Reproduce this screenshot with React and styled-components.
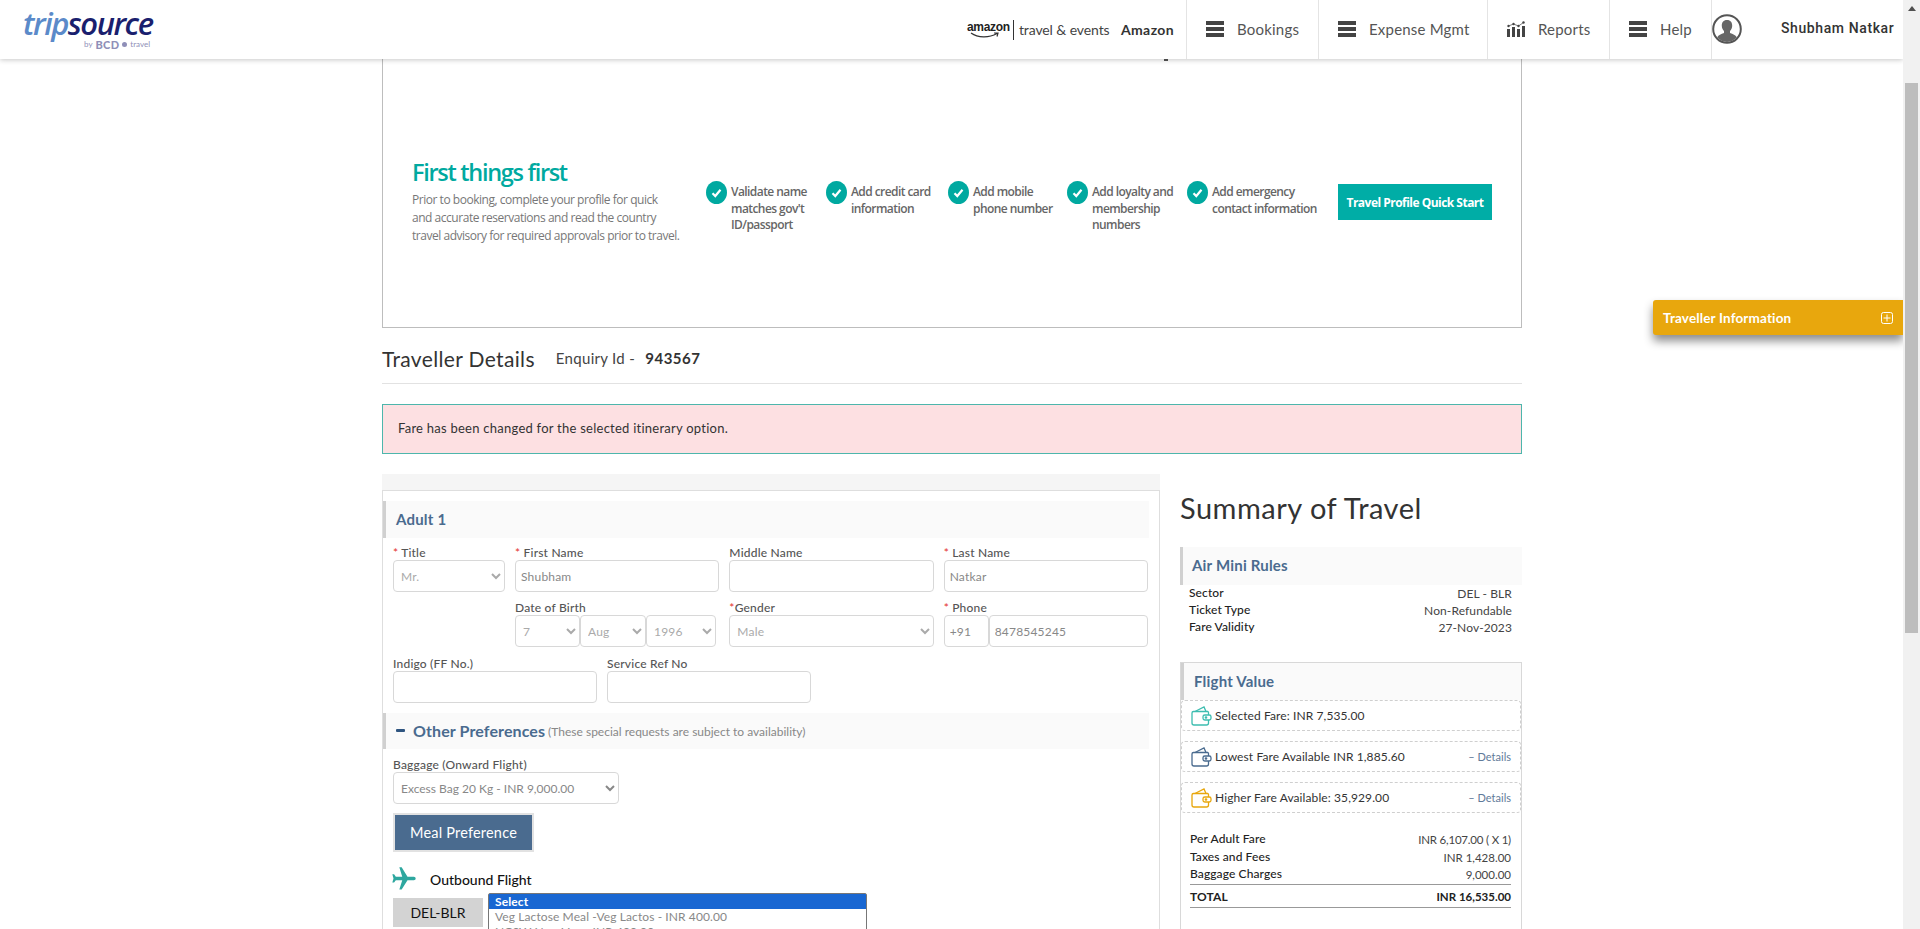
import React from 'react';
import styled, { createGlobalStyle } from 'styled-components';
import { MdFlight } from 'react-icons/md';

const font = '"Lato", "Liberation Sans", sans-serif';

const GlobalStyle = createGlobalStyle`
  html, body {
    margin: 0;
    height: 100%;
    overflow: hidden;
    background: #fff;
    font-family: ${font};
    color: #333;
  }
  * { box-sizing: border-box; }
`;

const Page = styled.div`
  display: flex;
  height: 929px;
  overflow: hidden;
`;

const Main = styled.div`
  position: relative;
  width: 1903px;
  height: 929px;
  overflow: hidden;
  flex: none;
`;

/* scrollbar */
const Track = styled.div`
  width: 17px;
  flex: none;
  background: #f1f1f1;
  display: flex;
  flex-direction: column;
  align-items: center;
`;

const Arrow = styled.div`
  width: 0;
  height: 0;
  margin-top: 6px;
  border-left: 4px solid transparent;
  border-right: 4px solid transparent;
  border-bottom: 5px solid #505050;
`;

const Thumb = styled.div`
  width: 13px;
  height: 550px;
  margin-top: 72px;
  background: #bdbdbd;
`;

/* header */
const Header = styled.header`
  position: relative;
  z-index: 5;
  height: 59px;
  background: #fff;
  box-shadow: 0 1px 5px rgba(0, 0, 0, 0.22);
  display: flex;
  justify-content: space-between;
`;

const LogoBox = styled.div`
  padding: 7px 0 0 23px;
  display: flex;
  flex-direction: column;
  align-items: flex-start;
`;

const LogoText = styled.div`
  font-family: "Open Sans", sans-serif;
  font-style: italic;
  font-weight: 600;
  font-size: 31px;
  line-height: 32px;
  letter-spacing: -1.5px;
  color: #1a1f6e;
  span { color: #5b8ac9; }
`;

const LogoBy = styled.div`
  display: flex;
  align-items: center;
  gap: 3px;
  margin: 0 0 0 61px;
  font-size: 8px;
  line-height: 11px;
  color: #8f8fb8;
  b { font-size: 11px; letter-spacing: 0.3px; font-weight: 900; }
`;

const Nav = styled.nav`
  display: flex;
  align-items: stretch;
`;

const Partner = styled.div`
  display: flex;
  align-items: center;
  width: 220px;
  border-right: 1px solid #e4e4e4;
  color: #333;
`;

const AmazonMark = styled.div`
  position: relative;
  font-family: "Liberation Sans", sans-serif;
  font-weight: 700;
  font-size: 12px;
  letter-spacing: -0.3px;
  line-height: 14px;
  padding: 0 3px 5px 0;
  color: #222;
  svg { position: absolute; left: 3px; bottom: 0; }
`;

const PartnerDivider = styled.i`
  width: 1px;
  height: 20px;
  background: #333;
  margin-right: 5px;
`;

const PartnerLabel = styled.span`
  font-size: 14px;
  letter-spacing: -0.1px;
  width: 91px;
  white-space: nowrap;
  color: #444;
`;

const PartnerName = styled.span`
  font-size: 14px;
  font-weight: 700;
  margin-left: 11px;
  letter-spacing: 0.4px;
`;

const NavItem = styled.a`
  display: flex;
  align-items: center;
  gap: 13px;
  width: ${(p) => p.$w}px;
  padding: 0 0 1px 19px;
  border-right: 1px solid #e4e4e4;
  font-size: 15px;
  letter-spacing: 0.2px;
  color: #555;
  white-space: nowrap;
`;

const UserBox = styled.div`
  display: flex;
  align-items: center;
  width: 191px;
  font-family: "Roboto", sans-serif;
  font-size: 14px;
  font-weight: 500;
  letter-spacing: 0.6px;
  color: #333;
  span { margin: -3px 0 0 39px; white-space: nowrap; }
  svg { margin-top: -1px; }
`;

/* content */
const Content = styled.div`
  width: 1140px;
  margin-left: 382px;
`;

const Banner = styled.section`
  position: relative;
  height: 269px;
  border: 1px solid #bdbdbd;
  border-top: 0;
  padding: 99px 0 0 29px;
  display: flex;
  align-items: flex-start;
`;

const BannerSpeck = styled.i`
  position: absolute;
  left: 781px;
  top: 0;
  width: 4px;
  height: 2px;
  background: #555;
`;

const Intro = styled.div`
  width: 294px;
  flex: none;
  margin-top: -1px;
`;

const IntroTitle = styled.h2`
  margin: 0 0 4px;
  font-family: "Open Sans", sans-serif;
  font-size: 23.5px;
  line-height: 30px;
  font-weight: 600;
  letter-spacing: -1.3px;
  color: #00a9a0;
`;

const IntroText = styled.p`
  margin: 0;
  font-family: "Open Sans", sans-serif;
  font-size: 12px;
  line-height: 18px;
  letter-spacing: -0.47px;
  color: #777;
  white-space: nowrap;
`;

const CheckItem = styled.div`
  display: flex;
  gap: 4px;
  width: ${(p) => p.$w}px;
  flex: none;
  margin-top: 23px;
`;

const CheckDot = styled.span`
  width: 21px;
  height: 23px;
  flex: none;
  border-radius: 50%;
  background: #00a9a0;
  display: flex;
  align-items: center;
  justify-content: center;
`;

const CheckText = styled.span`
  font-family: "Open Sans", sans-serif;
  font-size: 12px;
  font-weight: 600;
  line-height: 16.5px;
  letter-spacing: -0.57px;
  color: #666;
  white-space: pre-line;
  padding-top: 3px;
`;

const QuickStart = styled.div`
  width: 154px;
  height: 36px;
  flex: none;
  margin: 26px 0 0 10px;
  background: #00ada6;
  color: #fff;
  font-family: "Open Sans", sans-serif;
  font-size: 12px;
  font-weight: 700;
  letter-spacing: -0.52px;
  display: flex;
  align-items: center;
  justify-content: center;
  white-space: nowrap;
`;

const TitleRow = styled.div`
  height: 56px;
  display: flex;
  align-items: center;
  padding-top: 5px;
  border-bottom: 1px solid #e2e2e2;
`;

const PageTitle = styled.h1`
  margin: 0;
  font-size: 21px;
  font-weight: 400;
  letter-spacing: 0.35px;
  color: #333;
`;

const Enquiry = styled.span`
  margin-left: 21px;
  font-size: 15px;
  letter-spacing: 0.3px;
  color: #444;
  b { margin-left: 6px; color: #333; font-weight: 700; font-size: 15px; letter-spacing: 0.5px; }
`;

const Alert = styled.div`
  height: 50px;
  margin-top: 20px;
  padding: 0 0 2px 15px;
  border: 1px solid #4db6ac;
  background: #fde0e2;
  display: flex;
  align-items: center;
  font-size: 13px;
  letter-spacing: 0.25px;
  color: #333;
`;

const Columns = styled.div`
  display: grid;
  grid-template-columns: 778px 342px;
  column-gap: 20px;
  margin-top: 20px;
`;

const Band = styled.div`
  height: 16px;
  background: #f5f5f5;
`;

const FormPanel = styled.div`
  height: 500px;
  border: 1px solid #dedede;
  border-bottom: 0;
  padding-top: 10px;
`;

const SectionHead = styled.div`
  display: flex;
  align-items: center;
  height: ${(p) => p.$h}px;
  margin: ${(p) => p.$m || '0 10px 0 0'};
  padding: 0 0 2px ${(p) => p.$pad || 10}px;
  background: #fafafa;
  border-left: 3px solid #d0d0d0;
  font-size: 15px;
  font-weight: 700;
  letter-spacing: 0.2px;
  color: #4a6b8f;
`;

const Fields = styled.div`
  display: grid;
  grid-template-columns: 112px repeat(3, 1fr);
  column-gap: 10px;
  row-gap: 8px;
  margin: 7px 11px 0 10px;
`;

const Field = styled.div`
  grid-column: ${(p) => p.$col || 'auto'};
  min-width: 0;
`;

const Label = styled.label`
  display: block;
  height: 15px;
  font-size: 12px;
  line-height: 15px;
  font-weight: 500;
  letter-spacing: 0.2px;
  color: #555;
  em { color: #e53935; font-style: normal; }
`;

const controlStyle = `
  display: block;
  height: 32px;
  border: 1px solid #d8d8d8;
  border-radius: 4px;
  background: #fff;
  font-family: ${font};
  font-size: 12px;
  color: #888;
`;

const Input = styled.input`
  ${controlStyle}
  width: ${(p) => p.$w || '100%'};
  min-width: 0;
  padding: 0 5px;
  flex: ${(p) => p.$grow || 'none'};
  letter-spacing: 0.2px;
  outline: none;
`;

const Select = styled.select`
  ${controlStyle}
  width: ${(p) => p.$w || '100%'};
  padding: 0 3px;
  flex: none;
  letter-spacing: ${(p) => p.$spacing || '0.2px'};
  color: ${(p) => p.$muted ? '#aaa' : '#888'};
  outline: none;
`;

const Inline = styled.div`
  display: flex;
`;

const FieldRow = styled.div`
  display: flex;
  gap: 10px;
  margin: 9px 0 0 10px;
  ${Field} { width: 204px; }
`;

const PrefHead = styled(SectionHead)`
  gap: 7px;
  font-size: 16px;
  letter-spacing: 0.1px;
  i {
    width: 9px;
    height: 3px;
    border-radius: 1px;
    background: #2f5580;
    margin-right: 1px;
  }
  small {
    font-size: 12px;
    font-weight: 400;
    letter-spacing: 0;
    color: #888;
    margin: 2px 0 0 -4px;
  }
`;

const BaggageField = styled.div`
  margin: 8px 0 0 10px;
  width: 226px;
`;

const MealButton = styled.button`
  display: block;
  width: 141px;
  height: 39px;
  margin: 9px 0 0 10px;
  border: 2px solid #e2e2e2;
  background: #4a6b8f;
  color: #fff;
  font-family: ${font};
  font-size: 14.5px;
  letter-spacing: 0.2px;
`;

const FlightTitle = styled.div`
  display: flex;
  align-items: center;
  gap: 12px;
  height: 28px;
  margin: 13px 0 0 7px;
  font-size: 14px;
  font-weight: 500;
  color: #111;
  svg { transform: rotate(90deg); color: #2ea79f; }
`;

const MealRow = styled.div`
  display: flex;
  align-items: flex-start;
  margin: 0 0 0 10px;
`;

const SectorTag = styled.div`
  width: 90px;
  height: 29px;
  margin: 5px 5px 0 0;
  background: #d3d3d3;
  color: #111;
  font-size: 14px;
  display: flex;
  align-items: center;
  justify-content: center;
`;

const MealList = styled.select`
  width: 379px;
  height: 70px;
  border: 1px solid #777;
  padding: 0;
  font-family: ${font};
  font-size: 12px;
  letter-spacing: 0.1px;
  color: #888;
  overflow: hidden;
  outline: none;
  option {
    height: 15px;
    min-height: 15px;
    line-height: 15px;
    padding: 0 6px;
  }
  option:checked {
    background: #1967d2 linear-gradient(#1967d2, #1967d2);
    color: #fff;
    font-weight: 700;
  }
`;

/* summary */
const SummaryTitle = styled.h2`
  margin: 15px 0 21px;
  height: 37px;
  font-size: 29px;
  line-height: 37px;
  font-weight: 400;
  letter-spacing: 0.5px;
  color: #333;
`;

const RuleRows = styled.div`
  padding: 0 10px 0 9px;
  margin-top: -1px;
  height: 78px;
`;

const Row = styled.div`
  display: flex;
  justify-content: space-between;
  align-items: center;
  height: ${(p) => p.$h || 17}px;
  font-size: 12px;
  letter-spacing: 0.1px;
  color: #222;
  span:first-child { font-weight: ${(p) => p.$strong ? 700 : 500}; margin-top: -1px; }
  span:last-child {
    color: ${(p) => p.$strong ? '#222' : '#444'};
    font-weight: ${(p) => p.$strong ? 700 : 400};
    margin-top: 1px;
  }
`;

const ValueBox = styled.div`
  height: 300px;
  border: 1px solid #d8d8d8;
  border-bottom: 0;
`;

const FareRow = styled.div`
  display: flex;
  align-items: center;
  height: 31px;
  margin-bottom: 10px;
  padding: 0 9px;
  border: 1px dashed #cfcfcf;
  border-radius: 4px;
  font-size: 12px;
  letter-spacing: 0.1px;
  color: #333;
  svg { margin-right: 3px; flex: none; }
`;

const FareDetails = styled.span`
  margin-left: auto;
  font-size: 11px;
  color: #5f7a99;
  letter-spacing: 0;
`;

const Breakdown = styled.div`
  padding: 7px 10px 0 9px;
`;

const Amount = styled.span`
  font-size: 11.5px;
  letter-spacing: ${(p) => p.$tight ? '-0.2px' : '0'};
`;

const TotalRow = styled(Row)`
  margin-top: 2px;
  height: 24px;
  border-top: 1px solid #999;
  border-bottom: 1px solid #999;
  span:first-child, span:last-child { margin-top: 0; }
`;

const FloatingTab = styled.div`
  position: absolute;
  z-index: 4;
  left: 1653px;
  top: 300px;
  width: 250px;
  height: 35px;
  padding: 0 10px;
  background: #e8a70d;
  border-radius: 3px 0 0 3px;
  box-shadow: 0 6px 10px rgba(0, 0, 0, 0.45);
  color: #fff;
  font-size: 13.5px;
  font-weight: 700;
  letter-spacing: 0.15px;
  display: flex;
  align-items: center;
  justify-content: space-between;
`;

function Burger() {
  return (
    <svg width="18" height="16" viewBox="0 0 18 16" fill="#444">
      <rect width="18" height="4" />
      <rect y="6" width="18" height="4" />
      <rect y="12" width="18" height="4" />
    </svg>
  );
}

function ReportsIcon() {
  return (
    <svg width="18" height="16" viewBox="0 0 18 16" fill="#444">
      <rect x="0" y="8" width="3" height="8" />
      <rect x="5" y="6" width="3" height="10" />
      <rect x="10" y="8" width="3" height="8" />
      <rect x="15" y="5" width="3" height="11" />
      <circle cx="1.5" cy="5" r="1.2" />
      <circle cx="6.5" cy="3" r="1.2" />
      <circle cx="11.5" cy="5" r="1.2" />
      <circle cx="16.5" cy="1.5" r="1.2" />
      <path d="M1.500 5 6.500 3l5 2 5-3.500" stroke="#444" strokeWidth=".7" fill="none" />
    </svg>
  );
}

function Avatar() {
  return (
    <svg width="30" height="30" viewBox="0 0 30 30">
      <circle cx="15" cy="15" r="13.8" fill="#fff" stroke="#555" strokeWidth="2" />
      <path
        d="M15 6c-3.6 0-5.4 2.6-5.2 6 .1 2 .9 3.8 2.2 5v2c-2.8 1-5.6 2-6.8 4.3A13 13 0 0 0 15 28a13 13 0 0 0 9.8-4.7C23.6 21 20.800 20 18 19v-2c1.300-1.200 2.100-3 2.200-5 .2-3.400-1.600-6-5.200-6z"
        fill="#666"
      />
    </svg>
  );
}

function Check() {
  return (
    <svg width="11" height="10" viewBox="0 0 11 10" fill="none" stroke="#fff" strokeWidth="2.2">
      <path d="M1.500 5.200 4.300 8 9.500 1.800" />
    </svg>
  );
}

function Wallet({ color }) {
  return (
    <svg width="21" height="20" viewBox="0 0 21 20" fill="none" stroke={color} strokeWidth="1.3">
      <path d="M4 5.500 13 1l2 4.500" />
      <path d="M17 5.500H2.500A1.500 1.500 0 0 0 1 7v10a2 2 0 0 0 2 2h12.500a2 2 0 0 0 2-2v-3" />
      <path d="M17.500 9V7a1.500 1.500 0 0 0-.5-1.500" />
      <rect x="12" y="9" width="8" height="5" rx="1.800" />
      <circle cx="15" cy="11.500" r=".7" />
    </svg>
  );
}

function PlusBox() {
  return (
    <svg width="12" height="12" viewBox="0 0 12 12" fill="none" stroke="#fff" strokeWidth="1">
      <rect x=".5" y=".5" width="11" height="11" rx="2" />
      <path d="M6 2.500v7M2.500 6h7" />
    </svg>
  );
}

const checks = [
  { w: 120, text: "Validate name\nmatches gov't\nID/passport" },
  { w: 122, text: 'Add credit card\ninformation' },
  { w: 119, text: 'Add mobile\nphone number' },
  { w: 120, text: 'Add loyalty and\nmembership\nnumbers' },
  { w: 141, text: 'Add emergency\ncontact information' },
];

const navItems = [
  { label: 'Bookings', w: 132 },
  { label: 'Expense Mgmt', w: 169 },
  { label: 'Reports', w: 122, icon: <ReportsIcon /> },
  { label: 'Help', w: 102 },
];

const fares = [
  { label: 'Selected Fare: INR 7,535.00', color: '#3dbdb0' },
  { label: 'Lowest Fare Available INR 1,885.60', color: '#4a6b8f', details: true },
  { label: 'Higher Fare Available: 35,929.00', color: '#e8a70d', details: true },
];

export default function App() {
  return (
    <Page>
      <GlobalStyle />
      <Main>
        <Header>
          <LogoBox>
            <LogoText><span>trip</span>source</LogoText>
            <LogoBy>
              by <b>BCD</b>
              <svg width="5" height="5" viewBox="0 0 5 5"><circle cx="2.500" cy="2.500" r="2.500" fill="#8f8fb8" /></svg>
              travel
            </LogoBy>
          </LogoBox>
          <Nav>
            <Partner>
              <AmazonMark>
                amazon
                <svg width="30" height="7" viewBox="0 0 30 7" fill="none" stroke="#333" strokeWidth="1.200">
                  <path d="M1 1c7 5 18 5 26 .5M24 1l4 0-1 3.500" />
                </svg>
              </AmazonMark>
              <PartnerDivider />
              <PartnerLabel>travel &amp; events</PartnerLabel>
              <PartnerName>Amazon</PartnerName>
            </Partner>
            {navItems.map((item) => (
              <NavItem key={item.label} $w={item.w}>
                {item.icon || <Burger />}
                {item.label}
              </NavItem>
            ))}
            <UserBox>
              <Avatar />
              <span>Shubham Natkar</span>
            </UserBox>
          </Nav>
        </Header>

        <Content>
          <Banner>
            <BannerSpeck />
            <Intro>
              <IntroTitle>First things first</IntroTitle>
              <IntroText>
                Prior to booking, complete your profile for quick<br />
                and accurate reservations and read the country<br />
                travel advisory for required approvals prior to travel.
              </IntroText>
            </Intro>
            {checks.map((c) => (
              <CheckItem key={c.text} $w={c.w}>
                <CheckDot><Check /></CheckDot>
                <CheckText>{c.text}</CheckText>
              </CheckItem>
            ))}
            <QuickStart>Travel Profile Quick Start</QuickStart>
          </Banner>

          <TitleRow>
            <PageTitle>Traveller Details</PageTitle>
            <Enquiry>Enquiry Id - <b>943567</b></Enquiry>
          </TitleRow>

          <Alert>Fare has been changed for the selected itinerary option.</Alert>

          <Columns>
            <div>
              <Band />
              <FormPanel>
                <SectionHead $h={37}>Adult 1</SectionHead>
                <Fields>
                  <Field>
                    <Label><em>*</em> Title</Label>
                    <Select $muted defaultValue="Mr."><option>Mr.</option></Select>
                  </Field>
                  <Field>
                    <Label><em>*</em> First Name</Label>
                    <Input defaultValue="Shubham" />
                  </Field>
                  <Field>
                    <Label>Middle Name</Label>
                    <Input />
                  </Field>
                  <Field>
                    <Label><em>*</em> Last Name</Label>
                    <Input defaultValue="Natkar" />
                  </Field>
                  <Field $col="2">
                    <Label>Date of Birth</Label>
                    <Inline>
                      <Select $muted $w="65px"><option>7</option></Select>
                      <Select $muted $w="66px"><option>Aug</option></Select>
                      <Select $muted $w="70px"><option>1996</option></Select>
                    </Inline>
                  </Field>
                  <Field>
                    <Label><em>*</em>Gender</Label>
                    <Select $muted><option>Male</option></Select>
                  </Field>
                  <Field>
                    <Label><em>*</em> Phone</Label>
                    <Inline>
                      <Input $w="45px" defaultValue="+91" />
                      <Input $w="auto" $grow="1 1 0" defaultValue="8478545245" />
                    </Inline>
                  </Field>
                </Fields>
                <FieldRow>
                  <Field>
                    <Label>Indigo (FF No.)</Label>
                    <Input />
                  </Field>
                  <Field>
                    <Label>Service Ref No</Label>
                    <Input />
                  </Field>
                </FieldRow>
                <PrefHead $h={36} $m="10px 10px 0 0" $pad={10}>
                  <i />
                  Other Preferences
                  <small>(These special requests are subject to availability)</small>
                </PrefHead>
                <BaggageField>
                  <Label>Baggage (Onward Flight)</Label>
                  <Select $spacing="0"><option>Excess Bag 20 Kg - INR 9,000.00</option></Select>
                </BaggageField>
                <MealButton>Meal Preference</MealButton>
                <FlightTitle>
                  <MdFlight size={28} />
                  Outbound Flight
                </FlightTitle>
                <MealRow>
                  <SectorTag>DEL-BLR</SectorTag>
                  <MealList size={3} defaultValue="Select">
                    <option>Select</option>
                    <option>Veg Lactose Meal -Veg Lactos - INR 400.00</option>
                    <option>NCSW Non-Veg - INR 400.00</option>
                  </MealList>
                </MealRow>
              </FormPanel>
            </div>

            <div>
              <SummaryTitle>Summary of Travel</SummaryTitle>
              <SectionHead $h={38} $m="0" $pad={9}>Air Mini Rules</SectionHead>
              <RuleRows>
                <Row><span>Sector</span><span>DEL - BLR</span></Row>
                <Row><span>Ticket Type</span><span>Non-Refundable</span></Row>
                <Row><span>Fare Validity</span><span>27-Nov-2023</span></Row>
              </RuleRows>
              <ValueBox>
                <SectionHead $h={37} $m="0" $pad={10}>Flight Value</SectionHead>
                {fares.map((f) => (
                  <FareRow key={f.label}>
                    <Wallet color={f.color} />
                    {f.label}
                    {f.details && <FareDetails>– Details</FareDetails>}
                  </FareRow>
                ))}
                <Breakdown>
                  <Row $h={18}><span>Per Adult Fare</span><Amount $tight>INR 6,107.00 ( X 1)</Amount></Row>
                  <Row $h={17}><span>Taxes and Fees</span><Amount>INR 1,428.00</Amount></Row>
                  <Row $h={17}><span>Baggage Charges</span><Amount>9,000.00</Amount></Row>
                  <TotalRow $strong><span>TOTAL</span><Amount>INR 16,535.00</Amount></TotalRow>
                </Breakdown>
              </ValueBox>
            </div>
          </Columns>
        </Content>

        <FloatingTab>
          Traveller Information
          <PlusBox />
        </FloatingTab>
      </Main>
      <Track>
        <Arrow />
        <Thumb />
      </Track>
    </Page>
  );
}
